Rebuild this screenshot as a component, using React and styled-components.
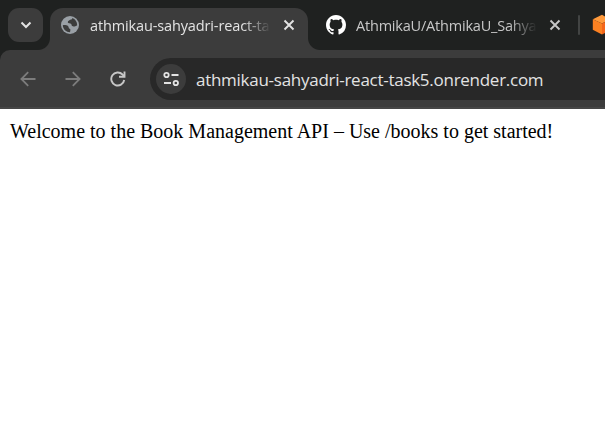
import React from 'react';
import styled, { createGlobalStyle } from 'styled-components';

const GlobalStyle = createGlobalStyle`
  html, body { margin: 0; padding: 0; background: #fff; overflow: hidden; }
`;

const ui = '"Open Sans", "Noto Sans", sans-serif';

const Window = styled.div`
  width: 605px;
  height: 443px;
  display: flex;
  flex-direction: column;
  overflow: hidden;
  background: #fff;
`;

const TabStrip = styled.div`
  height: 50px;
  flex: none;
  display: flex;
  align-items: flex-start;
  box-sizing: border-box;
  padding: 8px 0 0 8px;
  background: #1f2120;
  overflow: hidden;
`;

const TabSearch = styled.button`
  width: 35px;
  height: 34px;
  flex: none;
  display: grid;
  place-items: center;
  border: 0;
  padding: 0;
  border-radius: 11px;
  background: #3c3c3c;
  margin-right: 7px;
`;

const Tab = styled.div`
  position: relative;
  width: ${p => p.$width}px;
  height: 42px;
  flex: none;
  box-sizing: border-box;
  display: flex;
  align-items: center;
  padding: 0 12px 8px ${p => (p.$active ? 10 : 18)}px;
  border-radius: 13px 13px 0 0;
  background: ${p => (p.$active ? '#3c3c3c' : 'transparent')};
  color: ${p => (p.$active ? '#e3e3e3' : '#c7c7c7')};

  &::before, &::after {
    content: ${p => (p.$active ? '""' : 'none')};
    position: absolute;
    bottom: 0;
    width: 12px;
    height: 12px;
  }
  &::before {
    left: -12px;
    background: radial-gradient(circle at 0 0, transparent 11.5px, #3c3c3c 12.5px);
  }
  &::after {
    right: -12px;
    background: radial-gradient(circle at 100% 0, transparent 11.5px, #3c3c3c 12.5px);
  }
`;

const TabTitle = styled.span`
  width: 181px;
  flex: none;
  margin-left: 10px;
  margin-right: 12px;
  padding-top: 1px;
  white-space: nowrap;
  font: 14.5px/22px ${ui};
  letter-spacing: ${p => p.$tracking}px;
  -webkit-mask-image: linear-gradient(to right, #000 153px, transparent 181px);
  mask-image: linear-gradient(to right, #000 153px, transparent 181px);
`;

const Glyph = styled.svg`
  display: block;
  flex: none;
`;

const Divider = styled.div`
  width: 2px;
  height: 20px;
  flex: none;
  margin: 7px 12px 0 0;
  border-radius: 1px;
  background: #424443;
`;

const NextFavicon = styled.div`
  flex: none;
  margin-top: 6px;
`;

const ToolbarBack = styled.div`
  flex: none;
  background: #1f2120;
`;

const Toolbar = styled.div`
  height: 59px;
  box-sizing: border-box;
  display: flex;
  align-items: flex-start;
  padding: 8px 0 0 17px;
  border-radius: 10px 0 0 0;
  border-bottom: 2px solid #464646;
  background: #3c3c3c;
`;

const NavButton = styled.button`
  width: 22px;
  height: 41px;
  flex: none;
  margin-right: 23px;
  padding: 0;
  border: 0;
  background: none;
  display: grid;
  place-items: center;
  color: ${p => (p.$dim ? '#7c7c7c' : '#c7c7c7')};
`;

const AddressBar = styled.div`
  flex: 1;
  height: 42px;
  margin-left: -2px;
  box-sizing: border-box;
  display: flex;
  align-items: center;
  padding-left: 6px;
  border-radius: 21px 0 0 21px;
  background: #282828;
`;

const SiteInfo = styled.div`
  width: 30px;
  height: 30px;
  flex: none;
  display: grid;
  place-items: center;
  border-radius: 50%;
  background: #3c3c3c;
  margin-right: 10px;
`;

const Url = styled.span`
  padding-top: 2px;
  font: 17px/24px ${ui};
  letter-spacing: -0.27px;
  white-space: nowrap;
  color: #e3e3e3;
`;

const Page = styled.main`
  flex: 1;
  padding: 11px 10px;
  font: 20px/23px "Liberation Serif", "Times New Roman", serif;
  color: #000;
  white-space: nowrap;
`;

const Close = () => (
  <Glyph width="12" height="12" viewBox="0 0 12 12" fill="none" stroke="currentColor" strokeWidth="1.9">
    <path d="M1.500 1.500 10.500 10.500M10.500 1.500 1.500 10.500" />
  </Glyph>
);

const Globe = () => (
  <Glyph width="20" height="20" viewBox="0 0 20 20">
    <circle cx="10" cy="10" r="9" fill="#9aa0a6" />
    <path
      fill="#3c3c3c"
      d="M2.800 10.200c1.800-.2 4.200-.1 5.200.9.900.9.400 2.200 1.600 2.600 1 .3 1 .9.400 3.500C6.200 17.200 3 14.300 2.800 10.200z"
    />
    <path
      fill="#3c3c3c"
      d="M12.300 3.100c.2 1.500-1.700 1.500-3.300 2.300-1.700.9-1.600 2.700.2 2.900 1.700.2 2.200.5 2.400 1.800.2 1.400 1.500 1.500 3 1.300 1-.1 1.800-.4 2.600-1.100C17.200 7 15.200 4.100 12.300 3.100z"
    />
  </Glyph>
);

const GitHub = () => (
  <Glyph width="20" height="20" viewBox="0 0 16 16" fill="#fff">
    <path d="M8 0C3.580 0 0 3.580 0 8c0 3.540 2.290 6.530 5.470 7.590.4.070.55-.17.55-.38 0-.19-.01-.82-.01-1.490-2.010.37-2.530-.49-2.690-.94-.09-.23-.48-.94-.82-1.130-.28-.15-.68-.52-.01-.53.63-.01 1.080.58 1.230.82.72 1.210 1.870.87 2.330.66.07-.52.28-.87.51-1.070-1.780-.2-3.640-.89-3.640-3.950 0-.87.31-1.590.82-2.150-.08-.2-.36-1.020.08-2.120 0 0 .67-.21 2.200.82.64-.18 1.320-.27 2-.27s1.360.09 2 .27c1.530-1.040 2.200-.82 2.200-.82.44 1.100.16 1.920.08 2.120.51.56.82 1.270.82 2.150 0 3.070-1.870 3.750-3.650 3.950.29.25.54.73.54 1.480 0 1.070-.01 1.930-.01 2.200 0 .21.15.46.55.38A8.010 8.010 0 0 0 16 8c0-4.420-3.580-8-8-8z" />
  </Glyph>
);

const Cube = () => (
  <Glyph width="22" height="22" viewBox="0 0 22 22">
    <path d="M10 .8 18.500 5.300 10 9.500.8 5.300z" fill="#ff9a3c" />
    <path d="M.8 5.300 10 9.500v11L.8 15.800z" fill="#fb8122" />
    <path d="M10 9.500 19 5.300v10.500l-9 4.700z" fill="#f4661b" />
  </Glyph>
);

const Arrow = ({ forward }) => (
  <Glyph width="16" height="16" viewBox="0 0 16 16" fill="none" stroke="currentColor" strokeWidth="1.8">
    <path d={forward ? 'M.5 8H14.500M7.800 1.200 14.600 8 7.800 14.800' : 'M15.500 8H1.500M8.200 1.200 1.400 8l6.800 6.800'} />
  </Glyph>
);

const Reload = () => (
  <Glyph width="16" height="16" viewBox="0 0 16 16" fill="none" stroke="currentColor" strokeWidth="1.9">
    <path d="M14.200 9A6.500 6.500 0 1 1 12.500 3.500L14.500 5.500" />
    <path d="M14.500.5V5.700H9" />
  </Glyph>
);

const Tune = () => (
  <Glyph width="18" height="16" viewBox="0 0 18 16" fill="none" stroke="#e3e3e3" strokeWidth="1.8">
    <circle cx="4.500" cy="4" r="2.200" />
    <path d="M9.500 4h7M2 12h7" />
    <circle cx="13.800" cy="12" r="2.200" />
  </Glyph>
);

export default function App() {
  return (
    <>
      <GlobalStyle />
      <Window>
        <TabStrip>
          <TabSearch aria-label="Search tabs">
            <Glyph width="12" height="8" viewBox="0 0 12 8" fill="none" stroke="#e3e3e3" strokeWidth="2">
              <path d="M1.500 1.500 6 6l4.500-4.500" />
            </Glyph>
          </TabSearch>
          <Tab $width={258} $active>
            <Globe />
            <TabTitle $tracking={-0.13}>athmikau-sahyadri-react-ta</TabTitle>
            <Close />
          </Tab>
          <Tab $width={270}>
            <GitHub />
            <TabTitle $tracking={-0.2}>AthmikaU/AthmikaU_Sahya</TabTitle>
            <Close />
          </Tab>
          <Divider />
          <NextFavicon><Cube /></NextFavicon>
        </TabStrip>
        <ToolbarBack>
          <Toolbar>
            <NavButton $dim aria-label="Back"><Arrow /></NavButton>
            <NavButton $dim aria-label="Forward"><Arrow forward /></NavButton>
            <NavButton aria-label="Reload"><Reload /></NavButton>
            <AddressBar>
              <SiteInfo><Tune /></SiteInfo>
              <Url>athmikau-sahyadri-react-task5.onrender.com</Url>
            </AddressBar>
          </Toolbar>
        </ToolbarBack>
        <Page>Welcome to the Book Management API – Use /books to get started!</Page>
      </Window>
    </>
  );
}
